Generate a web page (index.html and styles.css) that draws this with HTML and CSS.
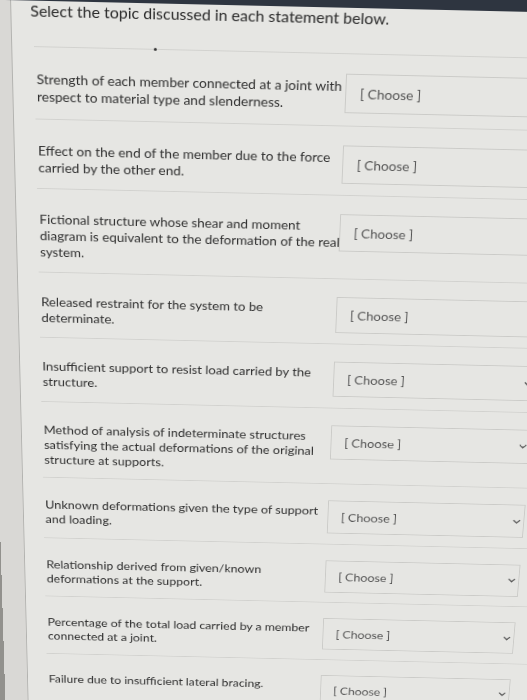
FILE: index.html
```html
<!DOCTYPE html>
<html lang="en">
<head>
<meta charset="utf-8">
<title>Matching question</title>
<link rel="stylesheet" href="styles.css">
</head>
<body>
<div class="screen">
  <div class="topbar"></div>
  <div class="page">
    <div class="gutter"></div>
    <div class="content">
      <h1 class="title">Select the topic discussed in each statement below.</h1>
      <div class="rule"><span class="dot"></span></div>
      <div class="rows">
        <div class="row">
          <div class="stmt">Strength of each member connected at a joint with respect to material type and slenderness.</div>
          <div class="select"><span class="choose">[ Choose ]</span><svg class="chev" viewBox="0 0 10 6"><path d="M1 1l4 4 4-4"/></svg></div>
        </div>
        <div class="row">
          <div class="stmt">Effect on the end of the member due to the force carried by the other end.</div>
          <div class="select"><span class="choose">[ Choose ]</span><svg class="chev" viewBox="0 0 10 6"><path d="M1 1l4 4 4-4"/></svg></div>
        </div>
        <div class="row">
          <div class="stmt">Fictional structure whose shear and moment diagram is equivalent to the deformation of the real system.</div>
          <div class="select"><span class="choose">[ Choose ]</span><svg class="chev" viewBox="0 0 10 6"><path d="M1 1l4 4 4-4"/></svg></div>
        </div>
        <div class="row">
          <div class="stmt">Released restraint for the system to be determinate.</div>
          <div class="select"><span class="choose">[ Choose ]</span><svg class="chev" viewBox="0 0 10 6"><path d="M1 1l4 4 4-4"/></svg></div>
        </div>
        <div class="row">
          <div class="stmt">Insufficient support to resist load carried by the structure.</div>
          <div class="select"><span class="choose">[ Choose ]</span><svg class="chev" viewBox="0 0 10 6"><path d="M1 1l4 4 4-4"/></svg></div>
        </div>
        <div class="row">
          <div class="stmt">Method of analysis of indeterminate structures satisfying the actual deformations of the original structure at supports.</div>
          <div class="select"><span class="choose">[ Choose ]</span><svg class="chev" viewBox="0 0 10 6"><path d="M1 1l4 4 4-4"/></svg></div>
        </div>
        <div class="row">
          <div class="stmt">Unknown deformations given the type of support and loading.</div>
          <div class="select"><span class="choose">[ Choose ]</span><svg class="chev" viewBox="0 0 10 6"><path d="M1 1l4 4 4-4"/></svg></div>
        </div>
        <div class="row">
          <div class="stmt">Relationship derived from given/known deformations at the support.</div>
          <div class="select"><span class="choose">[ Choose ]</span><svg class="chev" viewBox="0 0 10 6"><path d="M1 1l4 4 4-4"/></svg></div>
        </div>
        <div class="row">
          <div class="stmt">Percentage of the total load carried by a member connected at a joint.</div>
          <div class="select"><span class="choose">[ Choose ]</span><svg class="chev" viewBox="0 0 10 6"><path d="M1 1l4 4 4-4"/></svg></div>
        </div>
        <div class="row">
          <div class="stmt">Failure due to insufficient lateral bracing.</div>
          <div class="select"><span class="choose">[ Choose ]</span><svg class="chev" viewBox="0 0 10 6"><path d="M1 1l4 4 4-4"/></svg></div>
        </div>
      </div>
    </div>
  </div>
</div>
</body>
</html>
```

FILE: styles.css
```css
html, body {
  margin: 0;
  padding: 0;
}
body {
  background: #92918d;
  overflow: hidden;
  height: 700px;
  font-family: Lato, "Liberation Sans", sans-serif;
}
.screen {
  width: 640px;
  margin-left: -16px;
  margin-top: -30px;
  transform-origin: 153px 30px;
  transform: skewY(1.3deg) perspective(300px) rotateX(-3.4deg);
  background: #e5e5e2;
}
.topbar {
  height: 33px;
  background: #2e3540;
}
.page {
  display: flex;
  min-height: 900px;
}
.gutter {
  width: 26px;
  flex: none;
  background: #d9d8d5;
}
.content {
  flex: 1;
  border-left: 1px solid #b3b3b0;
  background: #e6e6e3;
}
.title {
  margin: 0 0 0 19px;
  padding-top: 0;
  font-size: 16px;
  line-height: 20px;
  font-weight: 400;
  color: #2a2a2a;
}
.rule {
  margin: 26px 0 0 22px;
  height: 0;
  border-top: 1px solid #d2d2cf;
  position: relative;
}
.dot {
  position: absolute;
  left: 121px;
  top: -2px;
  width: 3px;
  height: 3px;
  border-radius: 50%;
  background: #333;
}
.rows {
  margin-left: 22px;
}
.row {
  display: flex;
  align-items: flex-start;
  padding: 20px 0 12.5px;
  border-bottom: 1px solid #d2d2cf;
}
.stmt {
  width: 319px;
  flex: none;
  box-sizing: border-box;
  padding: 4px 0 0 2px;
  font-size: 14px;
  line-height: 18px;
  color: #303030;
}
.select {
  margin-left: -3px;
  width: 219px;
  height: 41px;
  flex: none;
  box-sizing: border-box;
  border: 1px solid #cbcbc8;
  display: flex;
  align-items: center;
  justify-content: space-between;
  padding: 0 3px 0 14px;
}
.choose {
  font-size: 14px;
  color: #555;
}
.chev {
  width: 9px;
  height: 6px;
  fill: none;
  stroke: #555;
  stroke-width: 1.6;
}
```
